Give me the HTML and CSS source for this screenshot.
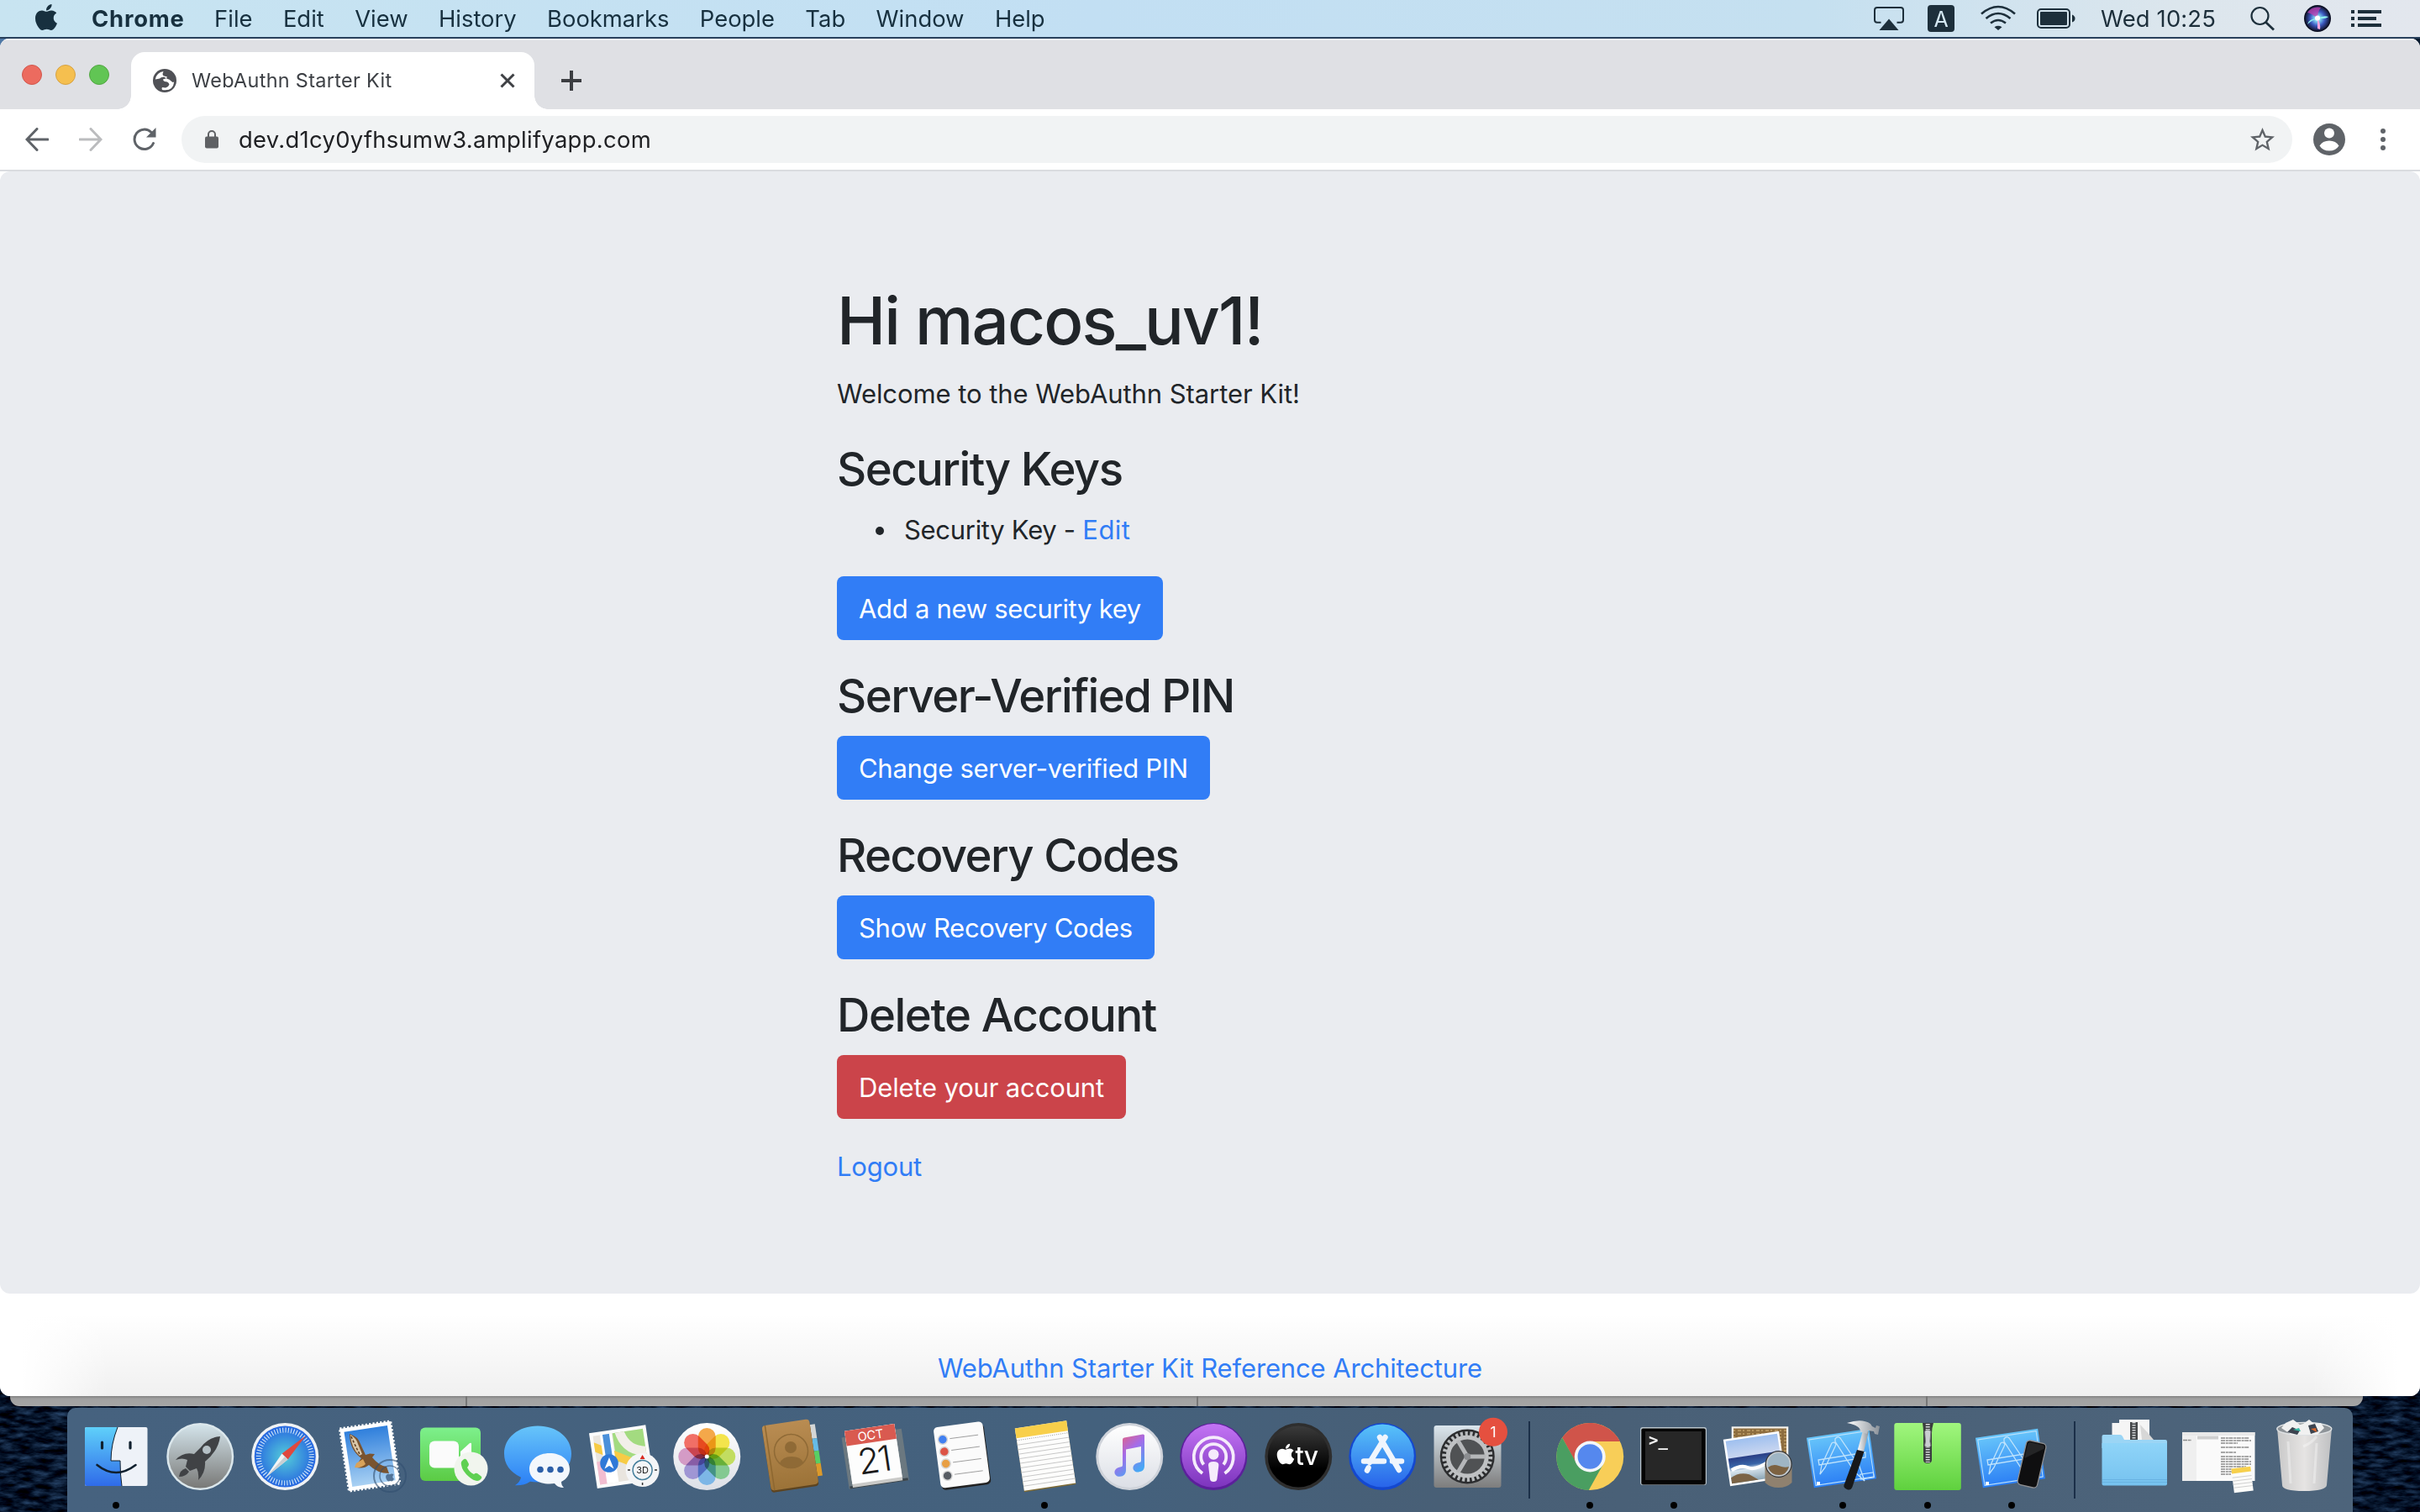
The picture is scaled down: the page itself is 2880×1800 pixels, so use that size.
FILE: index.html
```html
<!DOCTYPE html>
<html lang="en">
<head>
<meta charset="utf-8">
<title>WebAuthn Starter Kit</title>
<link rel="stylesheet" href="styles.css">
</head>
<body>
<svg class="wallpaper" width="2880" height="1800" aria-hidden="true">
  <filter id="waves" x="0" y="0" width="100%" height="100%" color-interpolation-filters="sRGB">
    <feTurbulence type="fractalNoise" baseFrequency="0.05 0.16" numOctaves="4" seed="7"/>
    <feColorMatrix values="0.35 0 0 0 -0.155  0.5 0 0 0 -0.175  0.65 0 0 0 -0.165  0 0 0 0 1"/>
  </filter>
  <rect y="1600" width="2880" height="200" filter="url(#waves)"/>
  <rect width="300" height="80" fill="#4f78a6"/>
</svg>

<header class="menubar">
  <svg class="apple" viewBox="4 32 376 448"><path d="M318.700 268.700c-.2-36.700 16.400-64.400 50-84.800-18.800-26.900-47.200-41.700-84.700-44.600-35.500-2.800-74.300 20.700-88.500 20.700-15 0-49.400-19.700-76.400-19.700C63.300 141.200 4 184.800 4 273.500q0 39.300 14.400 81.200c12.800 36.700 59 126.700 107.200 125.200 25.200-.6 43-17.900 75.800-17.900 31.800 0 48.300 17.900 76.400 17.900 48.600-.7 90.400-82.500 102.600-119.300-65.200-30.700-61.700-90-61.700-91.900zm-56.600-164.200c27.300-32.400 24.800-61.900 24-72.500-24.100 1.400-52 16.400-67.900 34.900-17.500 19.800-27.800 44.300-25.600 71.900 26.100 2 49.900-11.400 69.500-34.300z"/></svg>
  <nav class="menus">
    <span class="app-name">Chrome</span><span>File</span><span>Edit</span><span>View</span><span>History</span><span>Bookmarks</span><span>People</span><span>Tab</span><span>Window</span><span>Help</span>
  </nav>
  <div class="status">
    <svg class="st-airplay" viewBox="0 0 36 44"><path d="M8.500 26.800H4a3 3 0 0 1-3-3V12a3 3 0 0 1 3-3h28a3 3 0 0 1 3 3v11.800a3 3 0 0 1-3 3h-4.500" fill="none" stroke="currentColor" stroke-width="2"/><path d="M18 22.500 29.500 36h-23z"/></svg>
    <svg class="st-input" viewBox="0 0 32 44"><rect y="6" width="32" height="32" rx="4"/><text x="16" y="31.500" text-anchor="middle" font-size="25" fill="#d5e8f2">A</text></svg>
    <svg class="st-wifi" viewBox="0 0 42 44"><g fill="none" stroke="currentColor" stroke-width="2.600"><path d="M1 16.500Q21-.5 41 16.500M6.500 22Q21 10 35.500 22M12 27.500Q21 20.500 30 27.500"/></g><path d="M16.500 32.200Q21 29.500 25.500 32.200L21 36z"/></svg>
    <svg class="st-battery" viewBox="0 0 46 44"><rect x="1" y="11" width="38" height="22" rx="4" fill="none" stroke="currentColor" stroke-width="2"/><rect x="4" y="14" width="32" height="16" rx="1"/><path d="M42 17.500q3.500 1.500 3.500 4.500T42 26.500z"/></svg>
    <span class="clock">Wed 10:25</span>
    <svg class="st-search" viewBox="0 0 30 44"><g fill="none" stroke="currentColor"><circle cx="11.500" cy="19" r="10" stroke-width="2.200"/><path d="M18.500 26.500 28 35.500" stroke-width="2.800"/></g></svg>
    <svg class="st-siri" viewBox="0 0 32 44">
      <radialGradient id="siri" cx=".5" cy=".5"><stop offset="0" stop-color="#fff"/><stop offset=".25" stop-color="#7fd0f0"/><stop offset=".6" stop-color="#3b58c0"/><stop offset="1" stop-color="#141a3a"/></radialGradient>
      <circle cx="16" cy="22" r="16" fill="#0c1024"/><circle cx="16" cy="22" r="14.500" fill="url(#siri)"/>
      <path d="M4 15Q10 7 20 9q-4 5-4 13Q9 16 4 15z" fill="#c13fae" opacity=".75"/><path d="M16 22q4 6 3 13l-3-1z" fill="#f7a6dd"/><path d="M16 22q7-4 13-2-4 3-13 2zM16 22q-7 2-12 7 2-7 12-7z" fill="#8ff0ee"/><circle cx="16" cy="21.500" r="3" fill="#fff"/>
    </svg>
    <svg class="st-list" viewBox="0 0 36 44"><path d="M0 12h4v4H0zM0 20h4v4H0zM0 28h4v4H0zM8 12h28v4H8zM8 20h22v4H8zM8 28h28v4H8z"/></svg>
  </div>
</header>

<main class="window">
  <div class="tabstrip">
    <div class="lights"><i class="red"></i><i class="yellow"></i><i class="green"></i></div>
    <div class="tab">
      <svg class="globe" viewBox="-14 -14 28 28"><circle r="14" fill="#505156"/><path d="M-11.200-1.500A11.200 11.200 0 0 1-1.500-11L-2.500-8q0 2 2 2.500L3-4.500Q2.500-3 1-2.500L-2-1.500Q-2 0 0 1L3 1.500q2 1 2.500 3L4 7 1 8.500-3 8Q-4 9-3 11 10 13 11.200 1.500L9.500 2 7 0Q6-1.500 3.500-2L-1-4.500Q-5-4-6-2.500z" fill="#fff"/></svg>
      <span class="tab-title">WebAuthn Starter Kit</span>
      <svg class="close" viewBox="0 0 18 18"><path d="M1.500 1.500l15 15M16.500 1.500l-15 15" stroke="#3f4145" stroke-width="3"/></svg>
    </div>
    <svg class="newtab" viewBox="0 0 24 24"><path d="M12 0v24M0 12h24" stroke="#3c3e42" stroke-width="4"/></svg>
  </div>
  <div class="toolbar">
    <svg class="nav back" viewBox="0 0 28 28"><path d="M27 14H3M14 1.500 2 14l12 12.500"/></svg>
    <svg class="nav forward" viewBox="0 0 28 28"><path d="M1 14h24M14 1.500 26 14 14 26.500"/></svg>
    <svg class="nav reload" viewBox="0 0 28 28"><path d="M24.500 18.500A11.700 11.700 0 1 1 22 5.500"/><path d="M27.500 0v11.500H16z" fill="#5f6368" stroke="none"/></svg>
    <div class="omnibox">
      <svg class="lock" viewBox="0 0 16 22"><rect y="7.500" width="16" height="14" rx="2" fill="#5f6164"/><path d="M4 8V5a4 4 0 0 1 8 0v3" fill="none" stroke="#5f6164" stroke-width="2"/></svg>
      <span class="url">dev.d1cy0yfhsumw3.amplifyapp.com</span>
      <svg class="star" viewBox="2 2 20 19"><path fill="#5f6368" d="M22 9.240l-7.190-.62L12 2 9.190 8.630 2 9.240l5.460 4.730L5.820 21 12 17.270 18.180 21l-1.630-7.030L22 9.240zM12 15.400l-3.760 2.270 1-4.280-3.320-2.880 4.380-.38L12 6.100l1.710 4.040 4.380.38-3.320 2.880 1 4.280L12 15.400z"/></svg>
    </div>
    <svg class="profile" viewBox="0 0 38 38"><circle cx="19" cy="19" r="19" fill="#5f6368"/><circle cx="19" cy="11.500" r="6" fill="#fff"/><path d="M7.500 26.500Q11 20.500 19 20.500t11.500 6Q27 32.500 19 32.500T7.500 26.500z" fill="#fff"/></svg>
    <svg class="kebab" viewBox="0 0 6 28"><g fill="#5f6368"><circle cx="3" cy="4" r="3"/><circle cx="3" cy="14" r="3"/><circle cx="3" cy="24" r="3"/></g></svg>
  </div>
  <div class="page">
    <div class="jumbotron">
      <section class="content">
        <h1>Hi macos_uv1!</h1>
        <p class="lead">Welcome to the WebAuthn Starter Kit!</p>
        <h3>Security Keys</h3>
        <ul><li>Security Key - <a class="edit">Edit</a></li></ul>
        <button class="btn">Add a new security key</button>
        <h3>Server-Verified PIN</h3>
        <button class="btn">Change server-verified PIN</button>
        <h3>Recovery Codes</h3>
        <button class="btn">Show Recovery Codes</button>
        <h3 class="wide">Delete Account</h3>
        <button class="btn danger">Delete your account</button>
        <p class="logout"><a>Logout</a></p>
      </section>
    </div>
    <footer><a>WebAuthn Starter Kit Reference Architecture</a></footer>
  </div>
</main>

<div class="behind"><i class="p1"></i><i class="p2"></i><i class="p3"></i><i class="p4"></i></div>

<div class="dock">
  <svg class="defs" width="0" height="0"><defs>
    <linearGradient id="gBlue" x2="0" y2="1"><stop stop-color="#67c5fa"/><stop offset="1" stop-color="#2b7ff5"/></linearGradient>
    <linearGradient id="gGreen" x2="0" y2="1"><stop stop-color="#7df08c"/><stop offset="1" stop-color="#5bcb44"/></linearGradient>
    <linearGradient id="gZip" x2="0" y2="1"><stop stop-color="#a1f67e"/><stop offset="1" stop-color="#5fd13e"/></linearGradient>
    <linearGradient id="gFace" x2="0" y2="1"><stop stop-color="#5fd0fa"/><stop offset="1" stop-color="#2f6be9"/></linearGradient>
    <linearGradient id="gWhite" x2="0" y2="1"><stop stop-color="#fff"/><stop offset="1" stop-color="#dcdfe6"/></linearGradient>
    <linearGradient id="gRocket" x2="0" y2="1"><stop stop-color="#d3e3ea"/><stop offset="1" stop-color="#797977"/></linearGradient>
    <linearGradient id="gSteel" x2="0" y2="1"><stop stop-color="#dbe6ee"/><stop offset="1" stop-color="#7d7d7d"/></linearGradient>
    <radialGradient id="gSafari"><stop stop-color="#54cdd9"/><stop offset="1" stop-color="#2767e0"/></radialGradient>
    <linearGradient id="gPod" x2="0" y2="1"><stop stop-color="#c374f4"/><stop offset="1" stop-color="#7c34bd"/></linearGradient>
    <linearGradient id="gTv" x2="0" y2="1"><stop stop-color="#3b3b3b"/><stop offset=".7" stop-color="#000"/></linearGradient>
    <linearGradient id="gStore" x2="0" y2="1"><stop stop-color="#58c3f9"/><stop offset="1" stop-color="#2864ea"/></linearGradient>
    <linearGradient id="gNote" x2=".6" y2="1"><stop stop-color="#f45f68"/><stop offset=".5" stop-color="#a56be8"/><stop offset="1" stop-color="#46a9f5"/></linearGradient>
    <linearGradient id="gBrown" x2="0" y2="1"><stop stop-color="#b98c52"/><stop offset="1" stop-color="#9c7338"/></linearGradient>
    <linearGradient id="gFolder" x2="0" y2="1"><stop stop-color="#8fd4f8"/><stop offset="1" stop-color="#76c2ef"/></linearGradient>
    <linearGradient id="gSky" x2="0" y2="1"><stop stop-color="#2f7fdc"/><stop offset="1" stop-color="#a9d1f3"/></linearGradient>
    <linearGradient id="gSea" x2="0" y2="1"><stop stop-color="#9fc0ef"/><stop offset=".4" stop-color="#c9d6f0"/><stop offset=".42" stop-color="#2a3f86"/><stop offset=".62" stop-color="#3a66a8"/><stop offset=".72" stop-color="#d9e6ee"/><stop offset="1" stop-color="#8ba6b6"/></linearGradient>
    <linearGradient id="gBin" x2="1" y2="0"><stop stop-color="#c9c9c9"/><stop offset=".5" stop-color="#e6e4e3"/><stop offset="1" stop-color="#bfc0c2"/></linearGradient>
    <linearGradient id="gHammer" x2="1" y2="0"><stop stop-color="#fff"/><stop offset="1" stop-color="#8b929a"/></linearGradient>
    <g id="blueprint"><g transform="rotate(-8.500 48.500 60)"><rect x="11" y="30" width="75" height="60" fill="url(#gBlue)"/><rect x="13.500" y="32.500" width="70" height="55" fill="none" stroke="#bfe3fc"/></g>
      <g fill="none" stroke="#bfe3fc" stroke-width="1.300"><path d="M21 62l56-9v6l-55 9zM23 79l2-11 12-26q3-2 5 1l-1 3L29 71zM41 37q3-4 6-1l23 34 6 17-12-11-23-36z"/></g><rect x="19" y="88" width="4" height="4" fill="#fff"/></g>
  </defs></svg>

  <svg class="ico" viewBox="0 0 100.500 124"><rect x="13" y="23" width="74.500" height="70" rx="2" fill="#eef2f8"/><path d="M15 23h37Q44 43 44 63h11q0 17 2 30H15q-2 0-2-2V25q0-2 2-2z" fill="url(#gFace)"/><path d="M52 23Q44 43 44 63h11q0 17 2 30" fill="none" stroke="#10202e" stroke-width="1"/><path d="M27.500 68Q50 86 73.500 68" fill="none" stroke="#10202e" stroke-width="2.600" stroke-linecap="round"/><path d="M33.500 41v7M67 41v7" stroke="#10202e" stroke-width="3.200" stroke-linecap="round"/><circle class="run" cx="50" cy="116" r="4"/></svg>

  <svg class="ico" viewBox="0 0 100.500 124"><circle cx="50.250" cy="58" r="40" fill="#dbe7ec"/><circle cx="50.250" cy="58" r="37.500" fill="url(#gRocket)"/><path d="M74 34Q60 35 51 47L43 55Q30 52 21 62q8-3 14 0l-2 8 5 5 8-3q3 5 2 14 9-9 8-22 16-13 18-30z" fill="#404245"/><circle cx="58" cy="50" r="5" fill="#b5c0c5"/><path d="M33 72q-7 2-8 10 8 0 12-6z" fill="#404245"/></svg>

  <svg class="ico" viewBox="0 0 100.500 124"><circle cx="50.250" cy="58" r="40" fill="#f0f2f4"/><circle cx="50.250" cy="58" r="36.500" fill="url(#gSafari)"/><circle cx="50.250" cy="58" r="31.500" fill="none" stroke="#dcedfb" stroke-width="6" stroke-dasharray="1 2.300"/><path d="M75 33 46.500 54.500l7 7z" fill="#e0483e"/><path d="M27 83 46.500 54.500l7 7z" fill="#f2f4f5"/><path d="M27 83l26.500-21.500-3.500-3.500z" fill="#c9cfd3"/></svg>

  <svg class="ico" viewBox="0 0 100.500 124"><g transform="rotate(-8.500 51 57)"><rect x="20.500" y="20" width="61" height="75" fill="#fff"/><rect x="20.500" y="20" width="61" height="75" fill="none" stroke="#fff" stroke-width="3" stroke-dasharray="2.200 2.200"/><rect x="25" y="24.500" width="52" height="66" fill="url(#gSky)"/></g><path d="M27 31q10 3 13 12l6 13 5-1.500 6 .5-3 4q8 10 17 11l3 8q-14 0-24-10-6 5-14 3 1-7 5-11Q27 50 27 31z" fill="#7a5430"/><path d="M28 32q7 4 9 11l5 12-3 2Q29 48 28 32z" fill="#d9c6a8"/><path d="M29 34q5 12 11 23" fill="none" stroke="#5a3c20" stroke-width="1.500" stroke-dasharray="3 2"/><path d="M35 66l8-5 3 6q-5 5-13 4z" fill="#d9a25a"/><g fill="none" stroke="#324f70" opacity=".6"><circle cx="75" cy="81" r="19" stroke-width="2"/><circle cx="75" cy="81" r="12" stroke-width="1.500"/></g><g transform="translate(70 75) scale(.026)" fill="#324f70" opacity=".7"><path d="M318 268c0-36 17-64 50-84-19-27-47-42-84-45-36-3-75 21-89 21-15 0-49-20-76-20C63 141 4 185 4 273c0 90 70 207 121 206 26 0 44-18 76-18s48 18 77 18c48 0 90-82 102-119-65-30-62-90-62-92z"/></g></svg>

  <svg class="ico" viewBox="0 0 100.500 124"><rect x="10" y="23.500" width="72" height="63.500" rx="6" fill="url(#gGreen)"/><rect x="21" y="39.500" width="35" height="32" rx="6" fill="#fbfbfb"/><path d="M58 52l11-10q2-1 2 1v28q0 2-2 0L58 62z" fill="#fbfbfb"/><circle cx="70.500" cy="72.500" r="20" fill="#f1f5ee"/><path d="M61 62q3-3 5 1l2 4q0 2-2 4 3 6 8 8 2-2 4-1l4 3q3 2-1 5-5 3-13-4-8-7-9-14-1-4 2-6z" fill="#5fd052"/></svg>

  <svg class="ico" viewBox="0 0 100.500 124"><path d="M50 21.500c23 0 40 14 40 33s-17 34-40 34q-5 0-9-.8-7 5-18 4.600 6-4 7-9.500Q10 73 10 54.500c0-19 17-33 40-33z" fill="url(#gBlue)"/><path d="M64 54c14 0 24 8 24 19 0 7-4 12-10 15 0 3 1 5 3 7-5 0-9-2-11-5l-6 .5c-14 0-24-7-24-17.500S50 54 64 54z" fill="#f3f7fc"/><g fill="#2c5fa8"><circle cx="53" cy="73.500" r="3.800"/><circle cx="65" cy="73.500" r="3.800"/><circle cx="77" cy="73.500" r="3.800"/></g></svg>

  <svg class="ico" viewBox="0 0 100.500 124"><g transform="rotate(-8.500 48 58)"><rect x="14.500" y="25" width="68" height="66.500" fill="#fcfcfc"/><clipPath id="mc"><rect x="18.500" y="29" width="60" height="58.500"/></clipPath><g clip-path="url(#mc)"><rect x="18" y="28" width="62" height="60" fill="#e9e5df"/><rect x="42" y="28" width="40" height="36" fill="#a3db80"/><path d="M50 26Q54 54 82 56" fill="none" stroke="#f2efe9" stroke-width="11"/><rect x="56" y="66" width="20" height="24" fill="#d9d7d2"/><path d="M18 60h12v30H18z" fill="#f2bdd0"/><path d="M16 41 80 78" stroke="#f7cb45" stroke-width="10"/><path d="M34 28v60" stroke="#fff" stroke-width="14"/><path d="M34 28v34" stroke="#4a90da" stroke-width="8"/></g></g><circle cx="34" cy="66" r="10.800" fill="#2f79d8"/><path d="M34 59l5.500 13.500L34 69l-5.500 3.500z" fill="#fff"/><circle cx="73.600" cy="74" r="20" fill="#f4f5f7"/><circle cx="73.600" cy="74" r="11.500" fill="none" stroke="#467f9c" stroke-width="1.500"/><path d="M73.600 56l3 5h-6z" fill="#d9281e"/><path d="M56 74h3M88 74h3M73.600 89v3" stroke="#333" stroke-width="1.500"/><text x="73.600" y="78" font-size="11" text-anchor="middle" fill="#222">3D</text></svg>

  <svg class="ico" viewBox="0 0 100.500 124"><circle cx="50.250" cy="58" r="40" fill="url(#gWhite)"/><g class="petals" transform="translate(50.250 58)"><rect x="-10.500" y="-34" width="21" height="34" rx="10.500" fill="#f4a23c"/><rect transform="rotate(45)" x="-10.500" y="-34" width="21" height="34" rx="10.500" fill="#f4e23e"/><rect transform="rotate(90)" x="-10.500" y="-34" width="21" height="34" rx="10.500" fill="#bfdc55"/><rect transform="rotate(135)" x="-10.500" y="-34" width="21" height="34" rx="10.500" fill="#7cc68a"/><rect transform="rotate(180)" x="-10.500" y="-34" width="21" height="34" rx="10.500" fill="#75b3e6"/><rect transform="rotate(225)" x="-10.500" y="-34" width="21" height="34" rx="10.500" fill="#9a8fd2"/><rect transform="rotate(270)" x="-10.500" y="-34" width="21" height="34" rx="10.500" fill="#d295c2"/><rect transform="rotate(315)" x="-10.500" y="-34" width="21" height="34" rx="10.500" fill="#f0645a"/></g><circle cx="50.250" cy="58" r="2.500" fill="#fff"/></svg>

  <svg class="ico" viewBox="0 0 100.500 124"><g transform="rotate(-8.500 48 57)"><path d="M76 24h7v17h-7z" fill="#d4d6d6"/><path d="M76 41h7v15h-7z" fill="#66bbe6"/><path d="M76 56h7v15h-7z" fill="#59cf63"/><path d="M76 71h7v15h-7z" fill="#dc9a2b"/><rect x="20" y="18.500" width="57" height="79" rx="4" fill="#5d4420"/><rect x="20" y="17" width="57" height="78" rx="4" fill="url(#gBrown)"/><path d="M24 17v78" stroke="#8d6730" stroke-width="1.500"/></g><circle cx="49.500" cy="51.500" r="20" fill="none" stroke="#8f6a36" stroke-width="1.500"/><circle cx="49" cy="47" r="7" fill="#8f6a36"/><path d="M36 66q3-8 14-8t14 7q-5 7-14 7t-14-6z" fill="#8f6a36"/></svg>

  <svg class="ico" viewBox="0 0 100.500 124"><g transform="rotate(-8.500 47.500 56)"><path d="M13 30h72v62H13z" fill="#6b7880"/><path d="M14 89h70v3H14z" fill="#3a444b"/><rect x="17.500" y="23" width="60" height="68" fill="#c9c9c7"/><rect x="17.500" y="23" width="60" height="64" fill="#fdfdfd"/><rect x="17.500" y="23" width="60" height="18" fill="#d95a50"/><text x="47.500" y="37.500" font-size="14.500" text-anchor="middle" fill="#fff">OCT</text><text x="47" y="77" font-size="42" font-weight="300" text-anchor="middle" letter-spacing="-2" fill="#1b1b1b">21</text></g></svg>

  <svg class="ico" viewBox="0 0 100.500 124"><g transform="rotate(-7.500 51 56)"><rect x="23" y="22" width="59" height="73" rx="5" fill="#222"/><rect x="22" y="19.500" width="59" height="73" rx="5" fill="#fbfbfb"/><path d="M40 35h34M40 49h34M40 63.500h34M40 78h34" stroke="#9a9a9a" stroke-width=".9"/><g stroke="#d7d7d7" stroke-width="1.500"><circle cx="31.500" cy="35" r="5.500" fill="#4180f0"/><circle cx="31.500" cy="49.500" r="5.500" fill="#dc5346"/><circle cx="31.500" cy="64" r="5.500" fill="#e89f43"/><circle cx="31.500" cy="78.500" r="5.500" fill="#575c63"/></g></g></svg>

  <svg class="ico" viewBox="0 0 100.500 124"><g transform="rotate(-8.500 51 57)"><rect x="20" y="20" width="62" height="76" fill="#7d6a35"/><rect x="20" y="19.500" width="62" height="75" fill="#fdfdfc"/><rect x="20" y="19.500" width="62" height="12" fill="#f8cf4a"/><path d="M20 34h62" stroke="#999" stroke-width="1" stroke-dasharray="1 1.500"/><path d="M20 39.500h62M20 45h62M20 50.500h62M20 56h62M20 61.500h62M20 67h62M20 72.500h62M20 78h62M20 83.500h62M20 89h62" stroke="#c4c4c4" stroke-width=".9"/></g><circle class="run" cx="50" cy="116" r="4"/></svg>

  <svg class="ico" viewBox="0 0 100.500 124"><circle cx="50.250" cy="58" r="40" fill="#cfd3da"/><circle cx="50.250" cy="58" r="37" fill="url(#gWhite)"/><path d="M42 38q0-2 2-2.400l22-4q2-.2 2 1.500v36c0 5-3 7-7 7.300-8 .5-9-9-1-11l3-.7q1-.3 1-2V46l-18 3.500V74c0 5-3 7.500-7 7.800-8 .5-9-9-1-11l3-.8q1-.3 1-2z" fill="url(#gNote)"/></svg>

  <svg class="ico" viewBox="0 0 100.500 124"><circle cx="50.250" cy="58" r="40" fill="#5c1f9b"/><circle cx="50.250" cy="57" r="38" fill="url(#gPod)"/><g fill="none" stroke="#f5ebfb" stroke-width="3.800"><path d="M37 78a23.500 23.500 0 1 1 26.500 0"/><path d="M38.500 67.500a15 15 0 1 1 23.500 0"/></g><circle cx="50.250" cy="55.500" r="6.200" fill="#f5ebfb"/><path d="M44 68q0-4 6.200-4t6.200 4l-2 17q-.5 3-4.200 3t-4.200-3z" fill="#f5ebfb"/></svg>

  <svg class="ico" viewBox="0 0 100.500 124"><circle cx="50.250" cy="58" r="40" fill="#2e2e2e"/><circle cx="50.250" cy="58" r="36.500" fill="url(#gTv)"/><g transform="translate(24.500 41) scale(.0545)" fill="#fff"><path d="M318.700 268.700c-.2-36.700 16.400-64.400 50-84.800-18.800-26.900-47.200-41.700-84.700-44.600-35.500-2.800-74.300 20.700-88.500 20.700-15 0-49.400-19.700-76.400-19.700C63.300 141.200 4 184.800 4 273.500q0 39.300 14.400 81.200c12.800 36.700 59 126.700 107.200 125.200 25.200-.6 43-17.900 75.800-17.900 31.800 0 48.300 17.900 76.400 17.900 48.600-.7 90.400-82.500 102.600-119.300-65.200-30.700-61.700-90-61.700-91.900zm-56.600-164.200c27.300-32.400 24.800-61.900 24-72.500-24.100 1.400-52 16.400-67.900 34.900-17.500 19.800-27.800 44.300-25.600 71.900 26.100 2 49.900-11.400 69.500-34.300z"/></g><text x="46.500" y="67.500" font-size="30" font-weight="500" fill="#fff" letter-spacing="-.5">tv</text></svg>

  <svg class="ico" viewBox="0 0 100.500 124"><circle cx="50.250" cy="58" r="40" fill="#1448cf"/><circle cx="50.250" cy="57" r="37.500" fill="url(#gStore)"/><g stroke="#eff5fd" stroke-width="6.500" stroke-linecap="round"><path d="M53.500 35 35 65M47 35l23 39M28 63.500h24M62 63.500h11M33.500 71.500l-1.500 3"/></g></svg>

  <svg class="ico" viewBox="0 0 100.500 124"><rect x="10.500" y="21" width="80" height="74" rx="3" fill="url(#gSteel)"/><circle cx="50.250" cy="58" r="32.500" fill="#2c2d2f"/><circle cx="50.250" cy="58" r="27.500" fill="none" stroke="#b9bcbe" stroke-width="5" stroke-dasharray="3.200 2.560"/><circle cx="50.250" cy="58" r="23" fill="#505254" stroke="#bfc1c3" stroke-width="5"/><path d="M50.250 58h22M50.250 58 39 39M50.250 58 39 77" stroke="#b5b7b9" stroke-width="5"/><circle cx="50.250" cy="58" r="4" fill="#8b8d90"/><g><circle cx="81" cy="28.700" r="17" fill="#e5503f"/><text x="81" y="35" font-size="17.500" text-anchor="middle" fill="#fff">1</text></g></svg>

  <i class="divider"></i>

  <svg class="ico" viewBox="0 0 100.500 124"><g transform="translate(50.250 58)"><circle r="40" fill="#f8ce58"/><path d="M-33-22.600A40 40 0 0 1 35.700-18H0L-16 9z" fill="#d0544a"/><path d="M-33-22.600A40 40 0 0 0-1.500 40L15.500 9.500-15.600 9z" fill="#4a9e61"/><circle r="18.500" fill="#f5f7f9"/><circle r="14.700" fill="#5588ee"/></g><circle class="run" cx="50" cy="116" r="4"/></svg>

  <svg class="ico" viewBox="0 0 100.500 124"><rect x="10" y="23" width="79" height="69" rx="3" fill="#b9c4cb"/><rect x="11.300" y="24.500" width="76.500" height="67" rx="2" fill="#050505"/><rect x="16" y="28" width="67" height="58" fill="#272727"/><text class="mono" x="20" y="45" font-size="19" font-weight="700" fill="#f2f2f2">&gt;_</text><circle class="run" cx="50" cy="116" r="4"/></svg>

  <svg class="ico" viewBox="0 0 100.500 124"><rect x="17.700" y="22.300" width="67.600" height="52" fill="#f5f2ec"/><rect x="20" y="24.500" width="63" height="48" fill="#8d6d3f"/><path d="M20 27h63M20 31h63M20 35h63M20 39h63M20 43h63M20 47h63M20 51h63" stroke="#c0a06a" stroke-width="1.500" stroke-dasharray="2 3 4 2"/><g transform="rotate(-8.500 45 60)"><rect x="11.500" y="32.500" width="67" height="56" fill="#fdfdfd"/><rect x="14" y="35" width="62" height="51" fill="url(#gSea)"/><path d="M14 79q10-6 22-1l10 8H14z" fill="#7b6446"/><path d="M16 70q12-5 20 0t26-4" fill="none" stroke="#fff" stroke-width="4"/></g><path d="M57.500 67v22q6 6 16 6t16-6V67z" fill="#8f816f"/><circle cx="73.700" cy="67" r="16" fill="#33363a"/><circle cx="73.700" cy="67" r="14" fill="#9fb5c4" stroke="#c9cdd0" stroke-width="1.500"/><path d="M61 71q6-5 13-2t12 1q-3 10-12 10t-13-9z" fill="#7d6241"/></svg>

  <svg class="ico" viewBox="0 0 100.500 124"><use href="#blueprint"/><g fill="none" stroke="#bfe3fc"><rect x="71" y="78" width="16" height="6" transform="rotate(-8.500 79 81)"/></g><path d="M67.500 51 74 27l7 1-6 24z" fill="url(#gHammer)"/><path d="M55 18q18-6 28 1l2 3 4 2 1-3 4 1-2 10-4-1-1-3-7-1-1 4-8-3q0-7-16-10z" fill="url(#gHammer)"/><path d="M67 50l8.500 2L61.500 94q-2 5-6.500 3T51.500 92z" fill="#17181a"/><circle class="run" cx="50" cy="116" r="4"/></svg>

  <svg class="ico" viewBox="0 0 100.500 124"><rect x="10.300" y="18" width="79.500" height="80" rx="3" fill="url(#gZip)"/><path d="M44 18h13q-2 6-2 12v32q0 4-5 4t-5-4V30q0-6-1-12z" fill="#3a3d3f"/><path d="M50.200 19v46" stroke="#d9dcde" stroke-width="5" stroke-dasharray="1.500 1.500"/><path d="M46.500 28q3.700-4 7.400 0l-1 12 1 5q-3.700 5-7.400 0l1-5z" fill="#c9cdd0" stroke="#77797b"/><circle class="run" cx="50" cy="116" r="4"/></svg>

  <svg class="ico" viewBox="0 0 100.500 124"><use href="#blueprint"/><g transform="rotate(13 74 67)"><rect x="62" y="40" width="24" height="54" rx="4.500" fill="#0f0f10" stroke="#8e8e90" stroke-width="1.300"/><path d="M64 62 84 46v-1q0-3-3-3H67q-3 0-3 3z" fill="#242526"/></g><circle class="run" cx="50" cy="116" r="4"/></svg>

  <i class="divider"></i>

  <svg class="ico" viewBox="0 0 100.500 124"><path d="M23.500 18H32v-4h36v40H23.500z" fill="#f5f5f5"/><path d="M45 17h9v24h-9z" fill="#44474a"/><path d="M49.500 17v22" stroke="#cfd2d4" stroke-width="4" stroke-dasharray="1.500 1.500"/><path d="M57 20q8 8 16 18H59z" fill="#d7d7d7"/><path d="M11.500 34q0-2 2-2H33q2 0 3 2l2 4h49q2 0 2 2v8h-77.500z" fill="#9bd5f5"/><path d="M11.500 42H89v48.500q0 2-2 2H13.500q-2 0-2-2z" fill="url(#gFolder)"/><path d="M12 85.500h77M12 88.500h77" stroke="#65aede" stroke-width=".8"/></svg>

  <svg class="ico" viewBox="0 0 100.500 124"><rect x="6" y="29" width="86.500" height="58" fill="#fafafa"/><path d="M6 29h86.500v4H6z" fill="#e9e9e9"/><path d="M6 33h17v54H6z" fill="#efefef"/><rect x="24" y="33.500" width="25" height="4" fill="#cfcfcf"/><path d="M7 38.500h10M52 36h34M52 39h36M52 42h20M52 47h34M52 53h18M52 58h36M52 61h33M52 64h36M52 67h36M52 70h30M52 73h14M52 76h13M52 79h12" stroke="#8c8c8c" stroke-width="1.300" stroke-dasharray="5 .8 3 .6"/><g transform="rotate(-7 77 85)"><rect x="66" y="71" width="23" height="29" fill="#fcfcfa"/><rect x="66" y="71" width="23" height="6" fill="#f7d04c"/><path d="M66 82h23M66 86h23M66 90h23M66 94h23" stroke="#cfcfcf"/></g></svg>

  <svg class="ico" viewBox="0 0 100.500 124"><path d="M19 24q32-8 65 0l-6 68q-1 7-27 7t-26-7z" fill="url(#gBin)"/><ellipse cx="51.300" cy="25" rx="32.500" ry="7.500" fill="#8e9499" stroke="#dfe2e4" stroke-width="1.500"/><path d="M24 24l5-6 9-4 8 6 4-1 7-5 6 5 8-1 4 6-8 8H36z" fill="#f1f1f1"/><path d="M31 29l6-6 9 4-3 5zM56 21l8-2 4 9-9 3z" fill="#3c4450"/><path d="M38 26l7-2 2 4z" fill="#36b9a6"/><path d="M59 25l6-1 1 5z" fill="#d8652c"/><path d="M32 40l3 50M50 46q10-4 16-12M66 42l-3 48" fill="none" stroke="#fff" stroke-width="3" opacity=".35"/></svg>
</div>
</body>
</html>
```
FILE: styles.css
```css
* { box-sizing: border-box; }

body {
  margin: 0;
  width: 2880px;
  height: 1800px;
  overflow: hidden;
  background: #06182c;
  font-family: Inter, "Liberation Sans", sans-serif;
  color: #212529;
  display: flex;
  flex-direction: column;
  position: relative;
}

svg { display: block; flex: none; }
svg text { font-family: Inter, sans-serif; }
svg text.mono { font-family: "DejaVu Sans Mono", monospace; }

.wallpaper { position: absolute; inset: 0; z-index: -1; }

/* Menu bar */
.menubar {
  height: 44px;
  flex: none;
  margin-bottom: 2px;
  display: flex;
  align-items: center;
  padding-left: 42px;
  background: linear-gradient(90deg, #c8e4f1 0, #c2dff3 45%, #c5e0f0 75%, #dce6ed 90%, #e3e7ee 100%);
  box-shadow: 0 2px 0 #28405c;
  color: #17303f;
  font-size: 27.4px;
}
.apple { width: 26px; height: 31px; fill: #17303f; margin: -4px 41px 0 0; }
.menus { display: flex; gap: 36.4px; line-height: 44px; }
.app-name { font-weight: 700; letter-spacing: .8px; margin-right: -1px; }
.status { display: flex; margin-left: auto; padding-right: 46px; color: #1d2f3b; line-height: 44px; }
.status svg { height: 44px; fill: currentColor; }
.st-airplay { width: 36px; margin-right: 28px; }
.st-input { width: 32px; margin-right: 31px; }
.st-wifi { width: 42px; margin-right: 25px; }
.st-battery { width: 46px; margin-right: 30px; }
.clock { letter-spacing: .14px; width: 137px; white-space: nowrap; margin-right: 41px; }
.st-search { width: 30px; margin-right: 34px; }
.st-siri { width: 32px; margin-right: 24px; }
.st-list { width: 36px; }

/* Browser window */
.window {
  height: 1616px;
  flex: none;
  display: flex;
  flex-direction: column;
  background: #fff;
  border-radius: 11px 11px 12px 12px;
  overflow: hidden;
  position: relative;
  z-index: 1;
}
.tabstrip {
  height: 84px;
  flex: none;
  background: #dfe0e4;
  box-shadow: inset 0 2px 0 #f1f1f3;
  display: flex;
  padding: 16px 0 0 26px;
}
.lights { display: flex; gap: 16px; margin: 15px 26px 0 0; }
.lights i { width: 24px; height: 24px; border-radius: 50%; border: 1px solid; }
.lights .red { background: #ec6b5f; border-color: #d1574d; }
.lights .yellow { background: #f5bf4f; border-color: #d6a243; }
.lights .green { background: #61c554; border-color: #52a642; }
.tab {
  width: 480px;
  height: 68px;
  background: #fff;
  border-radius: 16px 16px 0 0;
  display: flex;
  align-items: center;
  padding: 0 23px 0 26px;
  position: relative;
}
.tab::before, .tab::after {
  content: "";
  position: absolute;
  bottom: 0;
  width: 16px;
  height: 16px;
}
.tab::before { left: -16px; background: radial-gradient(circle at 0 0, transparent 15.5px, #fff 16px); }
.tab::after { right: -16px; background: radial-gradient(circle at 100% 0, transparent 15.5px, #fff 16px); }
.globe { width: 28px; height: 28px; margin-right: 18px; }
.tab-title { font-size: 23.4px; letter-spacing: .33px; color: #3d4045; margin: -1px auto 0 0; }
.close { width: 18px; height: 18px; }
.newtab { width: 24px; height: 24px; margin: 22px 0 0 32px; }

.toolbar {
  height: 74px;
  flex: none;
  border-bottom: 2px solid #dadce0;
  display: flex;
  align-items: center;
  padding-left: 30px;
}
.nav { width: 28px; height: 28px; fill: none; stroke: #5f6368; stroke-width: 3; stroke-linecap: round; margin-right: 36px; }
.nav.forward { stroke: #bbbcbe; }
.nav.reload { margin-right: 30px; }
.omnibox {
  width: 2512px;
  height: 56px;
  border-radius: 28px;
  background: #f1f3f4;
  display: flex;
  align-items: center;
  padding: 0 21px 0 28px;
}
.lock { width: 16px; height: 22px; }
.url { margin: 0 auto 0 24px; font-size: 27.4px; letter-spacing: .31px; color: #202124; }
.star { width: 29px; height: 27.5px; }
.profile { width: 38px; height: 38px; margin-left: 25px; }
.kebab { width: 6px; height: 28px; margin-left: 42px; }

/* Page */
.page {
  flex: 1;
  background: linear-gradient(to bottom, transparent 1360px, rgba(0, 0, 0, .06) 1458px) #fff;
  position: relative;
}
.page::before, .page::after {
  content: "";
  position: absolute;
  bottom: 0;
  width: 130px;
  height: 118px;
}
.page::before { left: 0; background: linear-gradient(90deg, #fff 20%, transparent); }
.page::after { right: 0; background: linear-gradient(270deg, #fff 20%, transparent); }
.jumbotron {
  height: 1336px;
  background: #eaecf0;
  border-radius: 12px;
  padding: 130px 0 0 996px;
}
.content { width: 888px; display: flex; flex-direction: column; align-items: flex-start; font-size: 31px; line-height: 48px; }
h1 { margin: 0 0 15px; font-size: 78px; line-height: 96px; font-weight: 500; letter-spacing: -1.82px; }
p { margin: 0; }
.lead { margin-bottom: -1px; letter-spacing: -.07px; }
h3 { margin: 33px 0 14px; font-size: 54.5px; line-height: 67px; font-weight: 500; letter-spacing: -1.54px; white-space: nowrap; }
ul { margin: 1px 0 31px; padding: 0 0 0 80px; list-style: none; }
li { display: flex; align-items: center; white-space: pre; letter-spacing: -.3px; }
li::before { content: ""; width: 10px; height: 10px; border-radius: 50%; background: #212529; margin: 1px 24px 0 -34px; }
a { color: #317df6; }
.edit { letter-spacing: .5px; }
.btn {
  height: 76px;
  border: 0;
  border-radius: 8px;
  padding: 2px 26px 0;
  background: #317df6;
  color: #fff;
  font: 400 31px/48px Inter, "Liberation Sans", sans-serif;
  letter-spacing: -.29px;
}
.btn.danger { background: #cb444a; letter-spacing: -.16px; }
.logout { margin-top: 33px; letter-spacing: -.2px; }
.wide { letter-spacing: -1.42px; }
footer { padding-top: 65px; text-align: center; font-size: 31px; line-height: 48px; letter-spacing: -.13px; }

/* Window peeking out from behind */
.behind {
  height: 32px;
  margin: -20px 68px 2px 12px;
  flex: none;
  display: flex;
  background: linear-gradient(#7f7f7f 20px, #a0a0a0 23px, #a6a6a6);
  border-radius: 0 0 11px 11px;
}
.behind i { border-right: 2px solid #777; }
.p1 { width: 544px; }
.p2 { width: 870px; }
.p3 { width: 868px; }
.behind .p4 { border: 0; }

/* Dock */
.dock {
  height: 124px;
  flex: none;
  margin: 0 80px;
  padding-left: 7.75px;
  display: flex;
  border-radius: 10px 10px 0 0;
  background: linear-gradient(90deg, #46627f, #44617d 45%, #485f76 60%, #4d647b);
}
.defs { position: absolute; }
.ico { width: 100.5px; height: 124px; }
.run { fill: #000; }
.petals rect { mix-blend-mode: multiply; opacity: .93; }
.petals { isolation: isolate; }
.divider { width: 2px; height: 92px; margin: 16px 20.75px 0 22.75px; background: #1b2f48; }
```
